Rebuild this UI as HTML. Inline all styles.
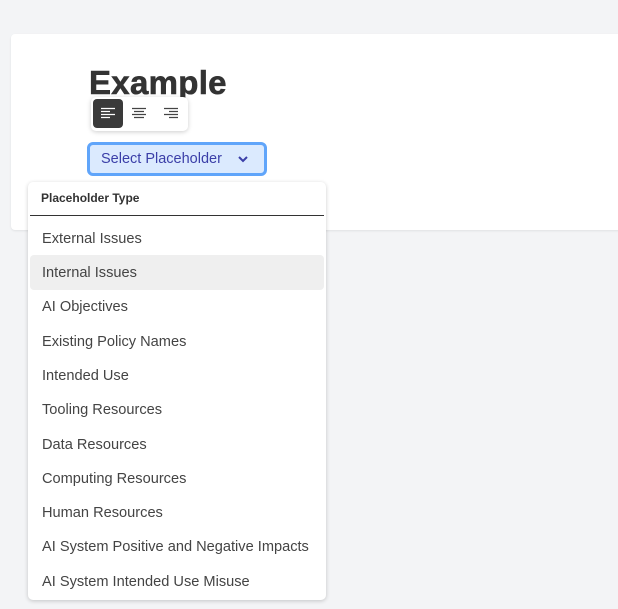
<!DOCTYPE html>
<html><head><style>
body{margin:0;width:618px;height:609px;background:#f3f4f6;font-family:"Liberation Sans",sans-serif;position:relative;overflow:hidden}
.card{position:absolute;left:11px;top:34px;width:620px;height:196px;background:#fff;border-radius:4px;box-shadow:0 1px 2px rgba(0,0,0,.08)}
h1{position:absolute;left:89px;top:64px;margin:0;font-size:33px;font-weight:bold;color:#333;letter-spacing:0.3px;-webkit-text-stroke:0.6px #333}
.tb{position:absolute;left:91px;top:97px;width:97px;height:34px;background:#fff;border-radius:5px;box-shadow:0 1px 5px rgba(0,0,0,.2)}
.tb .b{position:absolute;top:2px;width:30px;height:29px;border-radius:4px}
.tb .b svg{position:absolute;left:8px;top:8px}
.btn{position:absolute;left:87px;top:142px;width:174px;height:28px;border:3px solid #60a5fa;border-radius:6px;background:#dbeafe;color:#3b3fa8;font-size:14.5px;line-height:28px}
.btn span{position:absolute;left:11px}
.dd{position:absolute;left:28px;top:182px;width:298px;height:418px;background:#fff;border-radius:5px;box-shadow:0 1px 4px rgba(0,0,0,.2)}
.hd{position:absolute;left:13px;top:9px;font-size:12px;color:#333;font-weight:bold;letter-spacing:0}
.ln{position:absolute;left:2px;top:33px;width:294px;height:1px;background:#333}
.it{position:absolute;left:2px;width:282px;height:35px;padding-left:12px;line-height:36px;font-size:14.6px;color:#444;border-radius:4px}
</style></head><body>
<div class="card"></div>
<h1>Example</h1>
<div class="tb">
<div class="b" style="left:2px;background:#3a3a3a"><svg width="14" height="13"><path d="M0 1.5h14M0 4.5h9M0 7.5h14M0 10.5h9" stroke="#fff" stroke-width="1.3"/></svg></div>
<div class="b" style="left:33px"><svg width="14" height="13"><path d="M0 1.5h14M2 4.5h10M0 7.5h14M2 10.5h10" stroke="#444" stroke-width="1.3"/></svg></div>
<div class="b" style="left:65px"><svg width="14" height="13"><path d="M0 1.5h14M5 4.5h9M0 7.5h14M5 10.5h9" stroke="#444" stroke-width="1.3"/></svg></div>
</div>
<div class="btn"><span>Select Placeholder</span><svg style="position:absolute;left:148px;top:10px" width="10" height="8"><path d="M1 2l4 4 4-4" stroke="#3b3fa8" stroke-width="2" fill="none"/></svg></div>
<div class="dd">
<div class="hd">Placeholder Type</div><div class="ln"></div>
<div class="it" style="top:39px">External Issues</div>
<div class="it" style="top:73px;background:#efefef">Internal Issues</div>
<div class="it" style="top:107px">AI Objectives</div>
<div class="it" style="top:142px">Existing Policy Names</div>
<div class="it" style="top:176px">Intended Use</div>
<div class="it" style="top:210px">Tooling Resources</div>
<div class="it" style="top:245px">Data Resources</div>
<div class="it" style="top:279px">Computing Resources</div>
<div class="it" style="top:313px">Human Resources</div>
<div class="it" style="top:347px">AI System Positive and Negative Impacts</div>
<div class="it" style="top:382px">AI System Intended Use Misuse</div>
</div>
</body></html>
